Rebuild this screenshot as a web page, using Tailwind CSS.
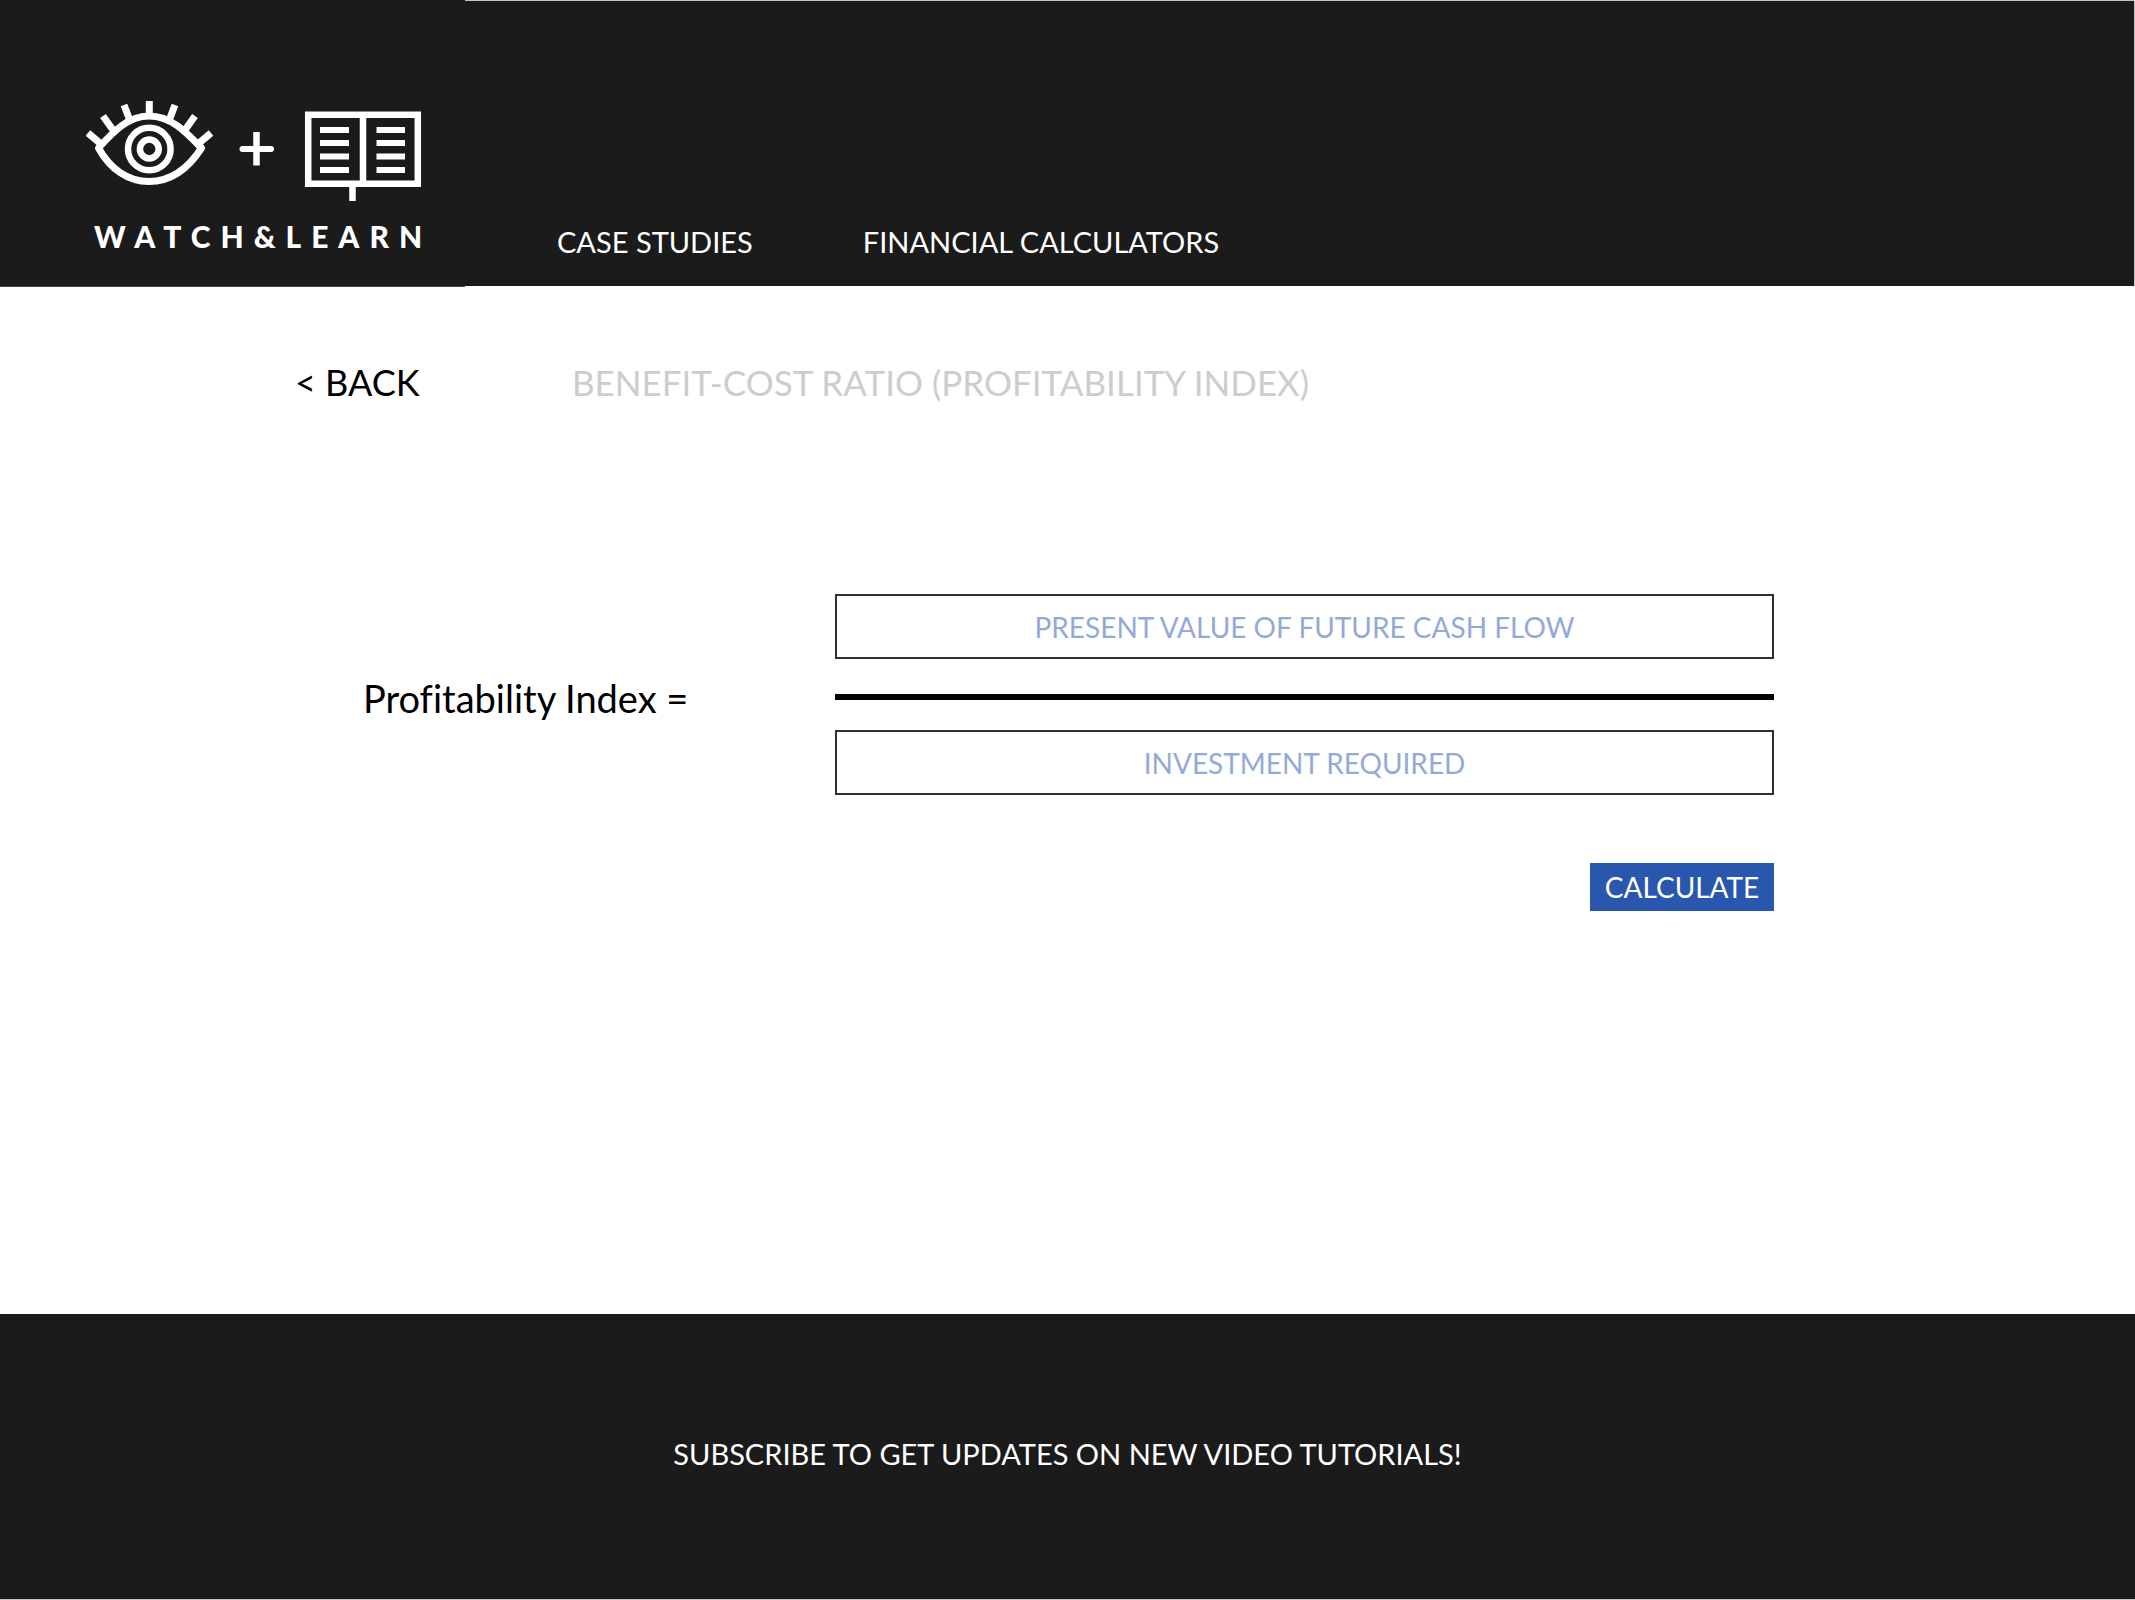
<!DOCTYPE html>
<html lang="en">
<head>
<meta charset="utf-8">
<meta name="viewport" content="width=device-width, initial-scale=1">
<title>Benefit-Cost Ratio | Watch &amp; Learn</title>
<script src="https://cdn.jsdelivr.net/npm/@tailwindcss/browser@4"></script>
</head>
<body class="flex min-h-screen flex-col bg-white font-['Lato',sans-serif] text-black">
<header class="flex bg-[#1b1b1b] text-white">
  <a href="#" aria-label="Watch and Learn home" class="-mb-px flex w-[465px] shrink-0 flex-col border-b border-[#4b4849] bg-[#1b1b1b] pt-[100px] pb-8 pl-[86px]">
    <svg class="h-[102px] w-[336px]" viewBox="86 100 336 102" fill="none" stroke="#fff" stroke-width="6.500" aria-hidden="true">
      <path d="M98.500 148 C113 132 128 116 149 116 C171 116 186 132 201.500 148 C188 169 170 181.500 149 181.500 C128 181.500 110 169 98.500 148Z" stroke-linejoin="round" stroke-width="7"/>
      <circle cx="149.300" cy="149" r="21.300"/>
      <circle cx="149.300" cy="149" r="9.400"/>
      <path d="M149.300 101V116M124 105L129 118M175 105L170 118M103 116L113 130M195 116L185 130M88 133L101 144M211 133L198 144" stroke-width="7"/>
      <path d="M242.500 149H271" stroke-linecap="round" stroke-width="6"/>
      <path d="M256.500 132V165.500"/>
      <path d="M308.200 114.700H417.800V183.700H308.200Z M363 115V184M352.500 184V201"/>
      <path d="M320 130H349M320 143H349M320 156.500H349M320 170H349M376.500 130H405M376.500 143H405M376.500 156.500H405M376.500 170H405" stroke-width="5.800"/>
    </svg>
    <span class="mt-4 pl-2 text-[30px] leading-9 font-black tracking-[10px] whitespace-nowrap">WATCH&amp;LEARN</span>
  </a>
  <nav class="flex flex-1 items-end gap-[110px] border-t border-r border-[#c4c4c4] pb-[26px] pl-[92px] text-[29px] leading-9">
    <a href="#">CASE STUDIES</a>
    <a href="#">FINANCIAL CALCULATORS</a>
  </nav>
</header>

<main class="flex-1 pt-[74px] pr-[17%] pl-[17%]">
  <div class="-ml-[68px] flex items-center text-[35px] leading-[44px]">
    <a href="#" class="w-[277px] shrink-0 text-[36px]">&lt; BACK</a>
    <h1 class="text-[#cdcdcd]">BENEFIT-COST RATIO (PROFITABILITY INDEX)</h1>
  </div>
  <form class="-mr-0.5 mt-[190px] flex items-start justify-between">
    <p class="pt-[82px] text-[38px] leading-[44px] [font-variant-ligatures:none]">Profitability Index =</p>
    <div class="flex w-[939px] flex-col">
      <input type="text" aria-label="Present value of future cash flow" placeholder="PRESENT VALUE OF FUTURE CASH FLOW" class="h-[65px] border-2 border-[#303030] text-center text-[28px] placeholder:text-[#93aad8]">
      <hr class="mt-[35px] mb-[30px] h-[6px] border-0 bg-black">
      <input type="text" aria-label="Investment required" placeholder="INVESTMENT REQUIRED" class="h-[65px] border-2 border-[#303030] text-center text-[28px] placeholder:text-[#93aad8]">
      <button type="button" class="mt-[68px] h-12 w-[184px] self-end bg-[#2957ae] text-[28px] text-white">CALCULATE</button>
    </div>
  </form>
</main>

<footer class="border-b border-[#c4c4c4] bg-[#1b1b1b] pt-[122px] pb-[127px] text-center text-[29px] leading-9 text-white">
  <a href="#">SUBSCRIBE TO GET UPDATES ON NEW VIDEO TUTORIALS!</a>
</footer>
</body>
</html>
